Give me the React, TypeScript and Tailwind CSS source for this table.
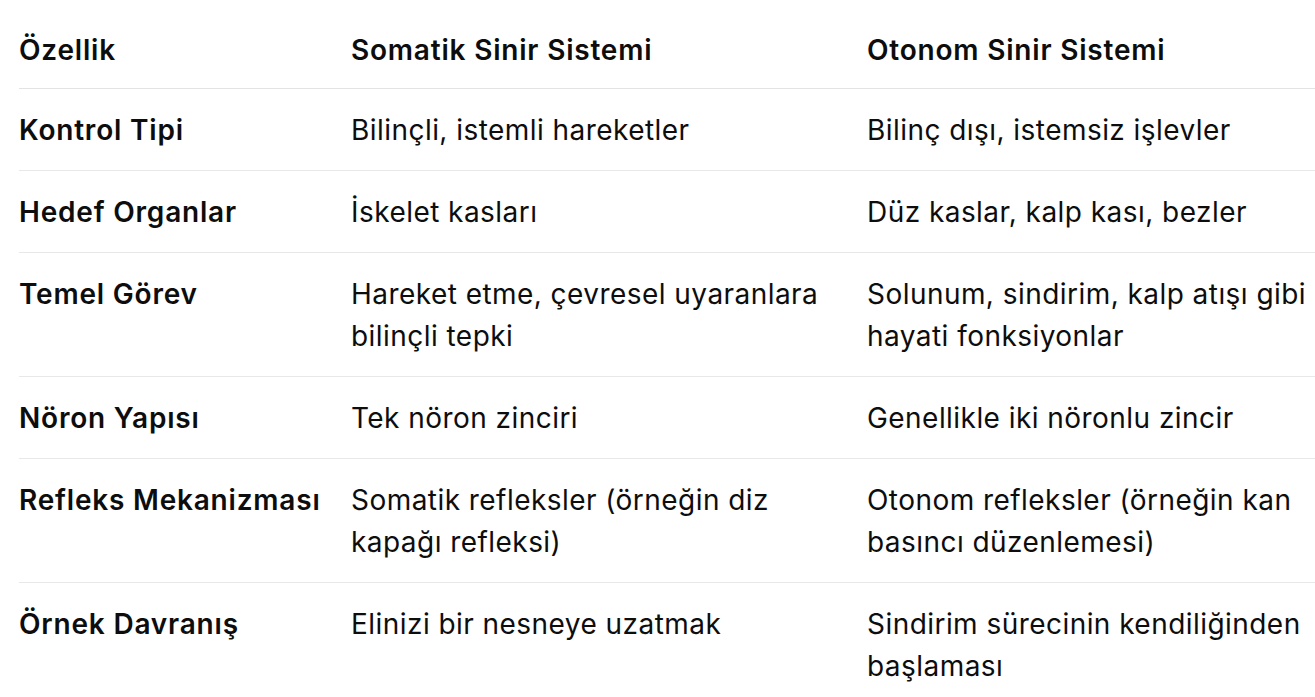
import React from "react";

const rows: [string, string, string][] = [
  ["Kontrol Tipi", "Bilinçli, istemli hareketler", "Bilinç dışı, istemsiz işlevler"],
  ["Hedef Organlar", "İskelet kasları", "Düz kaslar, kalp kası, bezler"],
  ["Temel Görev", "Hareket etme, çevresel uyaranlara bilinçli tepki", "Solunum, sindirim, kalp atışı gibi hayati fonksiyonlar"],
  ["Nöron Yapısı", "Tek nöron zinciri", "Genellikle iki nöronlu zincir"],
  ["Refleks Mekanizması", "Somatik refleksler (örneğin diz kapağı refleksi)", "Otonom refleksler (örneğin kan basıncı düzenlemesi)"],
  ["Örnek Davranış", "Elinizi bir nesneye uzatmak", "Sindirim sürecinin kendiliğinden başlaması"],
];

export default function App() {
  return (
    <div
      className="w-[1315px] h-[697px] overflow-hidden bg-white text-[#0d0d0d] pl-[19px] pt-[9px]"
      style={{ fontFamily: "Inter, 'Noto Sans', sans-serif" }}
    >
      <div className="w-[1400px] text-[28px] leading-[42px] tracking-[0.45px]">
        <div className="grid grid-cols-[332px_516px_552px] border-b border-[#e3e3e3] font-semibold tracking-[0.8px]">
          <div className="pt-[20px] pb-[17px] pr-4">Özellik</div>
          <div className="pt-[20px] pb-[17px] pr-4">Somatik Sinir Sistemi</div>
          <div className="pt-[20px] pb-[17px] pr-[92px]">Otonom Sinir Sistemi</div>
        </div>
        {rows.map((r, i) => (
          <div
            key={i}
            className={`grid grid-cols-[332px_516px_552px] ${i < rows.length - 1 ? "border-b border-[#e8e8e8]" : ""}`}
          >
            <div className="py-[19.5px] pr-4 font-semibold tracking-[0.8px]">{r[0]}</div>
            <div className="py-[19.5px] pr-[26px]">{r[1]}</div>
            <div className="py-[19.5px] pr-[92px]">{r[2]}</div>
          </div>
        ))}
      </div>
    </div>
  );
}
